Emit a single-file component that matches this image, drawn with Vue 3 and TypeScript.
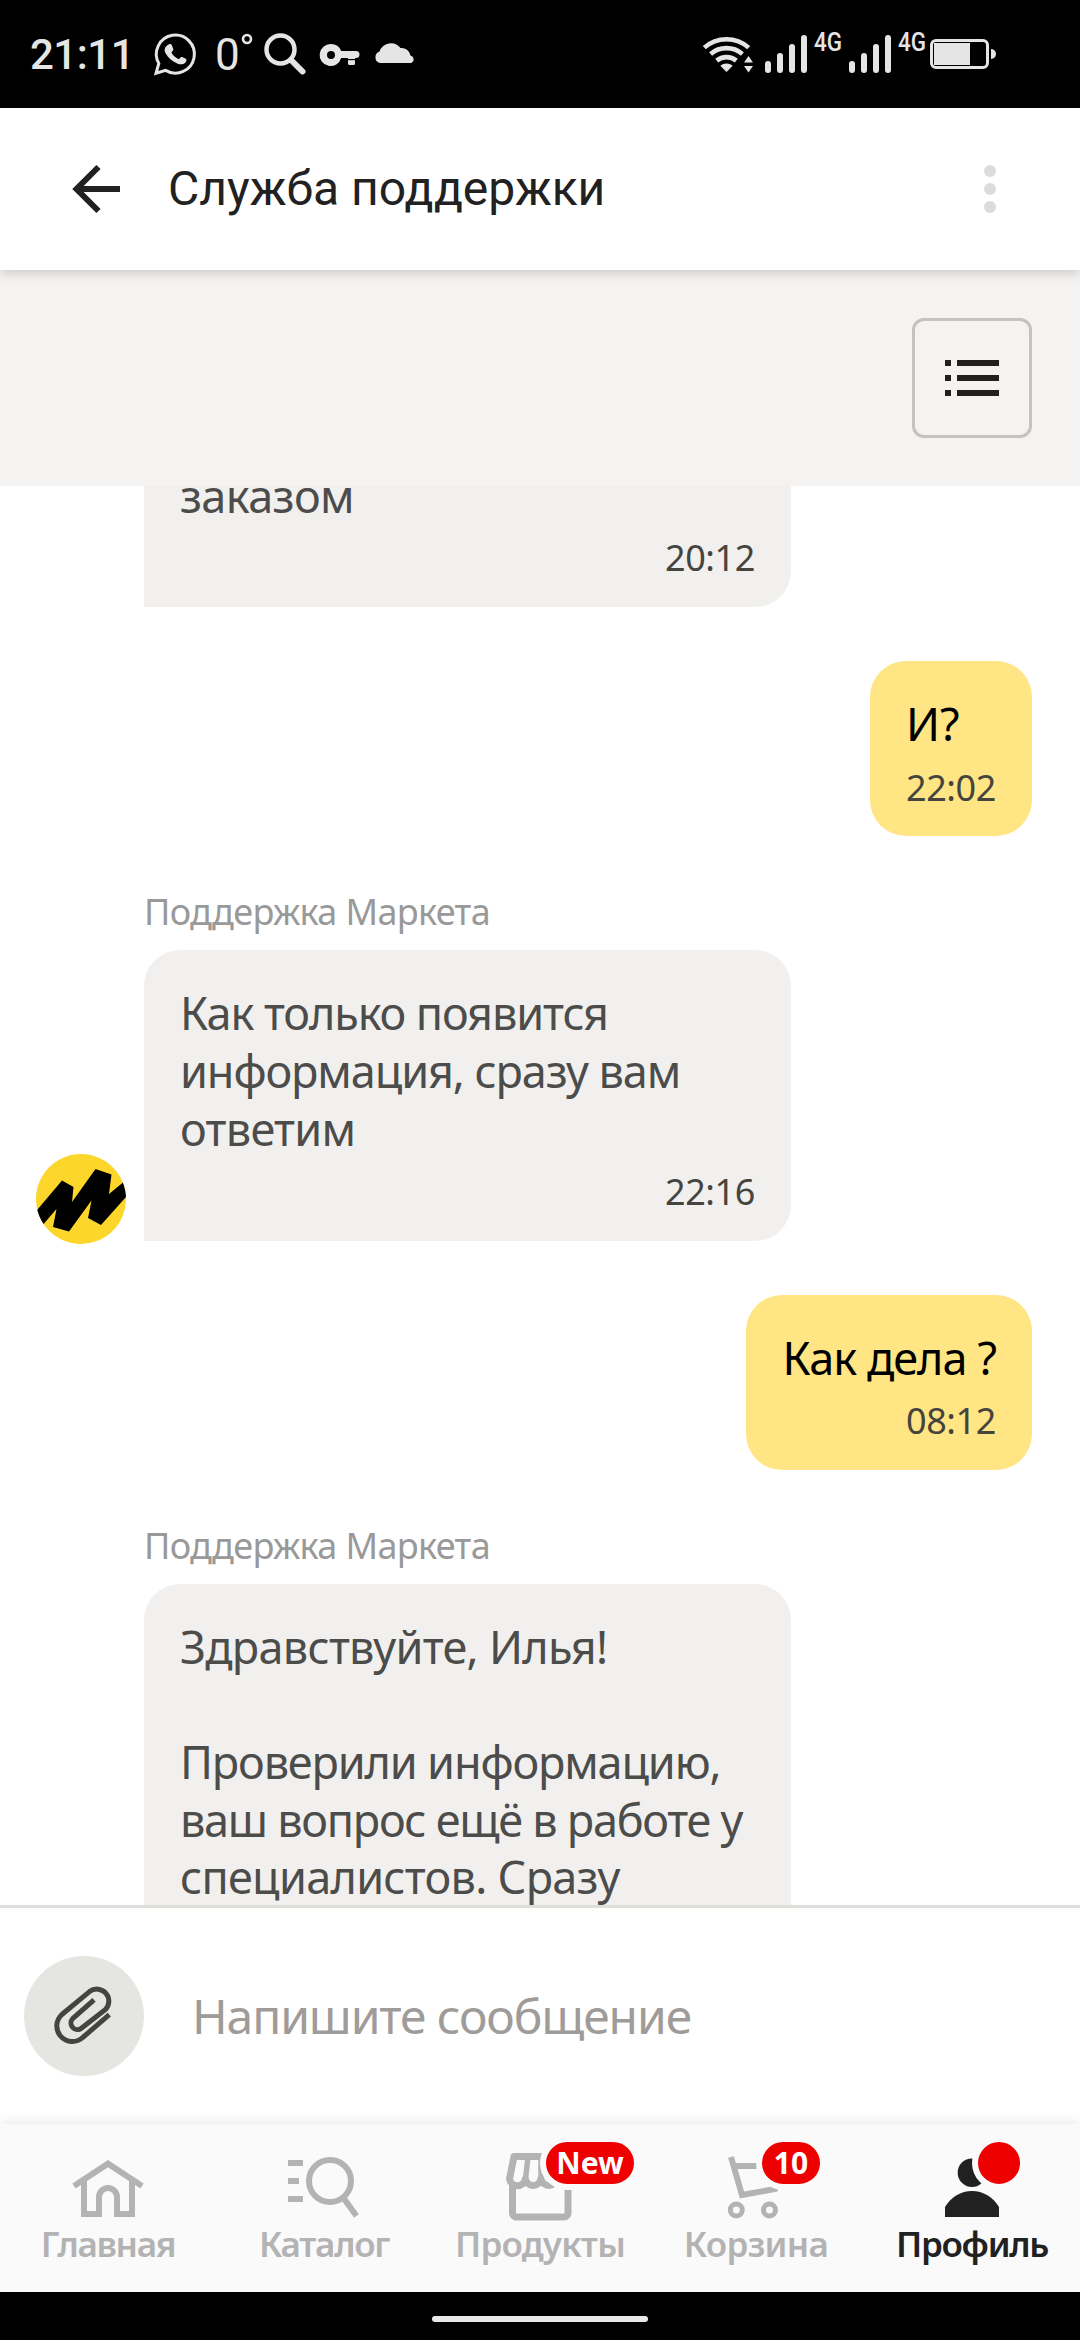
<script setup lang="ts">
interface Message {
  own: boolean
  sender?: string
  avatar?: boolean
  lines: string[]
  time: string
}

const messages: Message[] = [
  { own: false, lines: ['заказом'], time: '20:12' },
  { own: true, lines: ['И?'], time: '22:02' },
  {
    own: false,
    sender: 'Поддержка Маркета',
    avatar: true,
    lines: ['Как только появится', 'информация, сразу вам', 'ответим'],
    time: '22:16',
  },
  { own: true, lines: ['Как дела ?'], time: '08:12' },
  {
    own: false,
    sender: 'Поддержка Маркета',
    lines: [
      'Здравствуйте, Илья!',
      '',
      'Проверили информацию,',
      'ваш вопрос ещё в работе у',
      'специалистов. Сразу',
    ],
    time: '08:20',
  },
]
</script>

<template>
  <div class="screen">
    <div class="status">
      <span class="clock">21:11</span>
      <svg class="whatsapp" width="42" height="42" viewBox="0 0 42 42">
        <path d="M2 40.3L4.8 30.4A19 19 0 1 1 11.6 37.4Z" fill="none" stroke="#e5e5e5" stroke-width="3" />
        <path d="M14.6 11.6c1.2-.8 2.6-.6 3.1.5l1.5 3.6c.4 1-.2 2-1.8 3.8 1.6 3 4.2 5.4 7.600 6.700 1.400-1.800 2.100-2.500 3.200-2.100l3.600 1.700c1.200.6.8 2.300-.3 3.600-1.900 2.200-5 2.500-8.300 1.100-5.300-2.200-9-5.600-11.600-10.200-2-3.500-.6-6.900 3-8.700z" fill="#e5e5e5" />
      </svg>
      <span class="temp">0</span>
      <svg class="deg" width="12" height="12" viewBox="0 0 12 12"><circle cx="6" cy="6" r="4" fill="none" stroke="#e5e5e5" stroke-width="2.600" /></svg>
      <svg class="find" width="42" height="42" viewBox="0 0 42 42" fill="none" stroke="#e5e5e5">
        <circle cx="16.500" cy="16.500" r="14" stroke-width="4.500" />
        <path d="M27 27L38.500 38.500" stroke-width="6" stroke-linecap="round" />
      </svg>
      <svg class="key" width="40" height="24" viewBox="0 0 40 24">
        <path fill-rule="evenodd" fill="#e5e5e5" d="M11 1a11 11 0 0 1 10.200 7H36a3.500 3.500 0 0 1 0 7h-1v5.500a1.500 1.500 0 0 1-1.500 1.500h-4a1.500 1.500 0 0 1-1.500-1.500V15H21.200A11 11 0 1 1 11 1zM11 8a4 4 0 1 0 0 8a4 4 0 1 0 0-8z" />
        <path d="M27 16.600h9" stroke="#000" stroke-width="1.200" />
      </svg>
      <svg class="cloud" width="42" height="24" viewBox="0 0 42 24">
        <path d="M6 23A6 6 0 0 1 5.500 11.500A12 12 0 0 1 26.500 8A9 9 0 0 1 36.500 15.500A4 4 0 0 1 37.500 23Z" fill="#e5e5e5" />
      </svg>
      <span class="spring"></span>
      <svg class="radio" width="295" height="42" viewBox="0 0 295 42">
        <g fill="none" stroke="#e5e5e5" stroke-width="4.600">
          <path d="M2.300 14.600A33.500 33.500 0 0 1 46.700 14.600" />
          <path d="M8.600 21A24.500 24.500 0 0 1 40.400 21" />
          <path d="M14.700 27.600A15.500 15.500 0 0 1 34.300 27.600" />
        </g>
        <g fill="#e5e5e5">
          <path d="M24.500 39L18.300 32.800A9.500 9.500 0 0 1 30.700 32.800Z" />
          <path d="M46.500 23L51 29.500H42ZM46.500 39.500L51 33H42Z" />
          <rect x="63" y="28" width="6" height="12" rx="3" />
          <rect x="75" y="20" width="6" height="20" rx="3" />
          <rect x="87" y="11" width="6" height="29" rx="3" />
          <rect x="99" y="2" width="6" height="38" rx="3" />
          <text x="112" y="18" textLength="28" lengthAdjust="spacingAndGlyphs">4G</text>
          <rect x="147" y="28" width="6" height="12" rx="3" />
          <rect x="159" y="20" width="6" height="20" rx="3" />
          <rect x="171" y="11" width="6" height="29" rx="3" />
          <rect x="183" y="2" width="6" height="38" rx="3" />
          <text x="196" y="18" textLength="28" lengthAdjust="spacingAndGlyphs">4G</text>
          <rect x="232" y="10" width="36" height="22" />
          <path d="M289 16a5 5 0 0 1 0 10z" />
        </g>
        <rect x="229.500" y="7.500" width="56" height="27" rx="4.500" fill="none" stroke="#e5e5e5" stroke-width="3" />
      </svg>
    </div>

    <header class="bar">
      <svg class="back" width="50" height="50" viewBox="0 0 50 50" fill="none" stroke="#212121" stroke-width="6">
        <path d="M48 25H5" />
        <path d="M26.500 3L4.500 25L26.500 47" />
      </svg>
      <h1>Служба поддержки</h1>
      <div class="dots"><i></i><i></i><i></i></div>
    </header>

    <div class="tools">
      <button class="list" aria-label="Меню">
        <svg width="54" height="36" viewBox="0 0 54 36" fill="#21201f">
          <path d="M0 0h6v6H0zM12 0h42v6H12zM0 15h6v6H0zM12 15h42v6H12zM0 30h6v6H0zM12 30h42v6H12z" />
        </svg>
      </button>
    </div>

    <main class="chat">
      <div v-for="(m, i) in messages" :key="i" class="row" :class="{ own: m.own }">
        <div v-if="!m.own" class="side">
          <svg v-if="m.avatar" width="90" height="90" viewBox="0 0 90 90">
            <clipPath id="face"><circle cx="45" cy="45" r="45" /></clipPath>
            <g clip-path="url(#face)">
              <rect width="90" height="90" fill="#fcd62b" />
              <path d="M-4 62L26 26.500L37.500 33L36 48L59.500 15L75.500 20.500L73 40L90 26V43L65 71L52 64L55.500 46.500L33 77.500L17 73L20.500 55L5 73Z" fill="#000" />
            </g>
          </svg>
        </div>
        <div class="column">
          <div v-if="m.sender" class="sender">{{ m.sender }}</div>
          <div class="bubble">
            <p v-for="(line, j) in m.lines" :key="j" :class="'line-' + i + '-' + j">{{ line }}</p>
            <time>{{ m.time }}</time>
          </div>
        </div>
      </div>
    </main>

    <div class="composer">
      <div class="clip">
        <svg width="60" height="60" viewBox="0 0 60 60" fill="none" stroke="#45443f" stroke-width="5">
          <path d="M55.300 28.700L28.700 51.500A15.500 15.500 0 0 1 7.900 28.500L35.500 5.600A12 12 0 0 1 51.500 23.400L27.400 42.200A6.500 6.500 0 0 1 18.700 32.600L40 13.800" />
        </svg>
      </div>
      <span>Напишите сообщение</span>
    </div>

    <nav class="tabs">
      <div class="tab">
        <svg width="72" height="72" viewBox="0 0 72 72" fill="none" stroke="#b3b3b3" stroke-width="6">
          <path d="M2 38L36 15.700L70 38" />
          <path d="M12 32V66H27V49a9 9 0 0 1 18 0V66H60V32" />
        </svg>
        <span>Главная</span>
      </div>
      <div class="tab">
        <svg width="72" height="72" viewBox="0 0 72 72" fill="none" stroke="#b3b3b3" stroke-width="6">
          <path d="M0 15H15M0 33H11M0 51H15" />
          <circle cx="42" cy="33" r="21" />
          <path d="M55.500 50L68.500 68" />
        </svg>
        <span>Каталог</span>
      </div>
      <div class="tab">
        <svg width="72" height="72" viewBox="0 0 72 72" fill="none" stroke="#b3b3b3" stroke-width="7">
          <path d="M8.500 36V65a4 4 0 0 0 4 4H60a4 4 0 0 0 4-4V36" />
          <path stroke-linejoin="round" d="M5.500 31A8 8 0 0 0 21.300 31A8 8 0 0 0 37 31A8 8 0 0 0 52.700 31A8 8 0 0 0 68.500 31L64 8.500H10Z" />
          <path d="M24 9L21.500 31M37 9V31M50 9L52.500 31" stroke-width="5.500" />
        </svg>
        <b class="badge new">New</b>
        <span class="goods">Продукты</span>
      </div>
      <div class="tab">
        <svg width="72" height="72" viewBox="0 0 72 72" fill="none" stroke="#b3b3b3" stroke-width="6">
          <path d="M11 9L22 47L55 41L60 18H14" />
          <circle cx="16.300" cy="62" r="6" stroke-width="5" />
          <circle cx="49.500" cy="62" r="6" stroke-width="5" />
        </svg>
        <b class="badge ten">10</b>
        <span class="basket">Корзина</span>
      </div>
      <div class="tab active">
        <svg width="72" height="72" viewBox="0 0 72 72" fill="#212121">
          <circle cx="36" cy="24.700" r="14.300" />
          <path d="M9 59C15 49 25 43 36 43S57 49 63 59V69H9Z" />
        </svg>
        <b class="badge dot"></b>
        <span>Профиль</span>
      </div>
    </nav>

    <div class="gesture"><i></i></div>
  </div>
</template>

<style>
body {
  background: #fff;
}
</style>

<style scoped>
* {
  box-sizing: border-box;
}
svg {
  display: block;
  flex: none;
  overflow: visible;
}
.screen {
  display: flex;
  flex-direction: column;
  width: 1080px;
  height: 2340px;
  overflow: hidden;
  background: #fff;
  font-family: 'Noto Sans', 'Open Sans', sans-serif;
}
.status {
  flex: none;
  display: flex;
  align-items: flex-start;
  height: 108px;
  padding: 33px 83px 0 30px;
  background: #000;
  color: #e5e5e5;
  font-family: Roboto, sans-serif;
}
.clock {
  width: 124px;
  font-size: 42px;
  font-weight: 500;
  line-height: 44px;
  letter-spacing: -0.5px;
}
.temp {
  width: 25px;
  margin-left: 19px;
  font-size: 44px;
  line-height: 44px;
}
.deg {
  margin-left: 1px;
}
.find {
  margin-left: 11px;
}
.key {
  margin: 10px 0 0 14px;
}
.cloud {
  margin: 7px 0 0 14px;
}
.spring {
  flex: 1;
}
.radio text {
  font: 500 25px/25px Roboto, sans-serif;
}
.bar {
  flex: none;
  display: flex;
  align-items: center;
  height: 162px;
  padding: 0 84px 0 72px;
  background: #fff;
  z-index: 1;
  box-shadow: 0 2px 12px rgba(0, 0, 0, 0.2);
}
h1 {
  flex: 1;
  margin: 0 0 0 46px;
  color: #212121;
  font: 400 48px/60px Roboto, sans-serif;
}
.dots {
  display: flex;
  flex-direction: column;
  gap: 6px;
}
.dots i {
  width: 12px;
  height: 12px;
  border-radius: 50%;
  background: #dcdcdc;
}
.tools {
  flex: none;
  display: flex;
  justify-content: flex-end;
  align-items: center;
  height: 216px;
  padding-right: 48px;
  background: #f4f3f1;
}
.list {
  display: flex;
  align-items: center;
  justify-content: center;
  width: 120px;
  height: 120px;
  padding: 0;
  border: 3px solid #c4c3bf;
  border-radius: 12px;
  background: none;
}
.chat {
  flex: none;
  height: 1422px;
  overflow: hidden;
  border-bottom: 3px solid #dedfda;
}
.row {
  display: flex;
  align-items: flex-end;
  margin-bottom: 54px;
}
.row.own {
  justify-content: flex-end;
  padding-right: 48px;
}
.side {
  flex: none;
  width: 144px;
  padding-left: 36px;
}
.side svg {
  margin-bottom: -3px;
}
.column {
  flex: none;
  width: 647px;
}
.own .column {
  width: auto;
}
.sender {
  height: 62px;
  margin-top: -2px;
  color: #999;
  font-size: 36px;
  line-height: 48px;
  letter-spacing: -0.65px;
}
.bubble {
  padding: 34px 36px 24.6px;
  border-radius: 36px 36px 36px 0;
  background: #f1f0ee;
  color: #4c4c4b;
}
.own .bubble {
  border-radius: 36px;
  background: #ffe584;
  color: #000;
}
.bubble p {
  height: 57.6px;
  margin: 0;
  font-size: 45px;
  line-height: 57.6px;
  letter-spacing: -1.1px;
  white-space: pre;
}
.bubble .line-0-0 {
  letter-spacing: -0.6px;
}
.bubble .line-1-0 {
  letter-spacing: 0;
}
.bubble .line-2-2,
.bubble .line-4-0,
.bubble .line-4-4 {
  letter-spacing: -0.72px;
}
.bubble .line-3-0 {
  letter-spacing: -0.95px;
}
.bubble .line-4-2 {
  letter-spacing: -1.15px;
}
.bubble .line-4-3 {
  letter-spacing: -1.27px;
}
.bubble time {
  display: block;
  margin-top: 11px;
  color: #45443f;
  font-size: 36px;
  line-height: 48px;
  letter-spacing: -0.4px;
  text-align: right;
}
.row:first-child {
  margin-top: -53px;
}
.row:first-child .bubble {
  padding-bottom: 25.6px;
}
.row:first-child time {
  margin-top: 9px;
}
.composer {
  flex: none;
  display: flex;
  align-items: center;
  gap: 48px;
  height: 216px;
  padding-left: 24px;
  color: #9e9b98;
  font-size: 48px;
  letter-spacing: -1.1px;
}
.composer span {
  margin-bottom: 2px;
}
.clip {
  display: flex;
  align-items: center;
  justify-content: center;
  width: 120px;
  height: 120px;
  border-radius: 50%;
  background: #e5e5e1;
}
.tabs {
  flex: none;
  display: flex;
  height: 168px;
  background: #fafafa;
  box-shadow: 0 -1px 12px rgba(0, 0, 0, 0.1);
  z-index: 1;
}
.tab {
  position: relative;
  display: flex;
  flex-direction: column;
  align-items: center;
  width: 216px;
  padding-top: 24px;
  color: #b3b3b3;
  font-size: 35px;
  font-weight: 600;
  line-height: 48px;
  letter-spacing: -1.3px;
}
.tab .goods {
  letter-spacing: -0.8px;
}
.tab .basket {
  letter-spacing: -0.7px;
}
.active {
  color: #212121;
}
.badge {
  position: absolute;
  top: 12px;
  height: 54px;
  border: 6px solid #fafafa;
  border-radius: 27px;
  background: #ef0000;
  color: #fff;
  font-size: 30px;
  font-weight: 700;
  line-height: 42px;
  letter-spacing: 0;
  text-align: center;
}
.new {
  left: 108px;
  width: 100px;
}
.ten {
  left: 108px;
  width: 70px;
}
.dot {
  left: 108px;
  width: 54px;
}
.gesture {
  flex: none;
  display: flex;
  justify-content: center;
  height: 48px;
  padding-top: 24px;
  background: #000;
  z-index: 1;
}
.gesture i {
  width: 216px;
  height: 6px;
  border-radius: 3px;
  background: #e8e8e8;
}
</style>
